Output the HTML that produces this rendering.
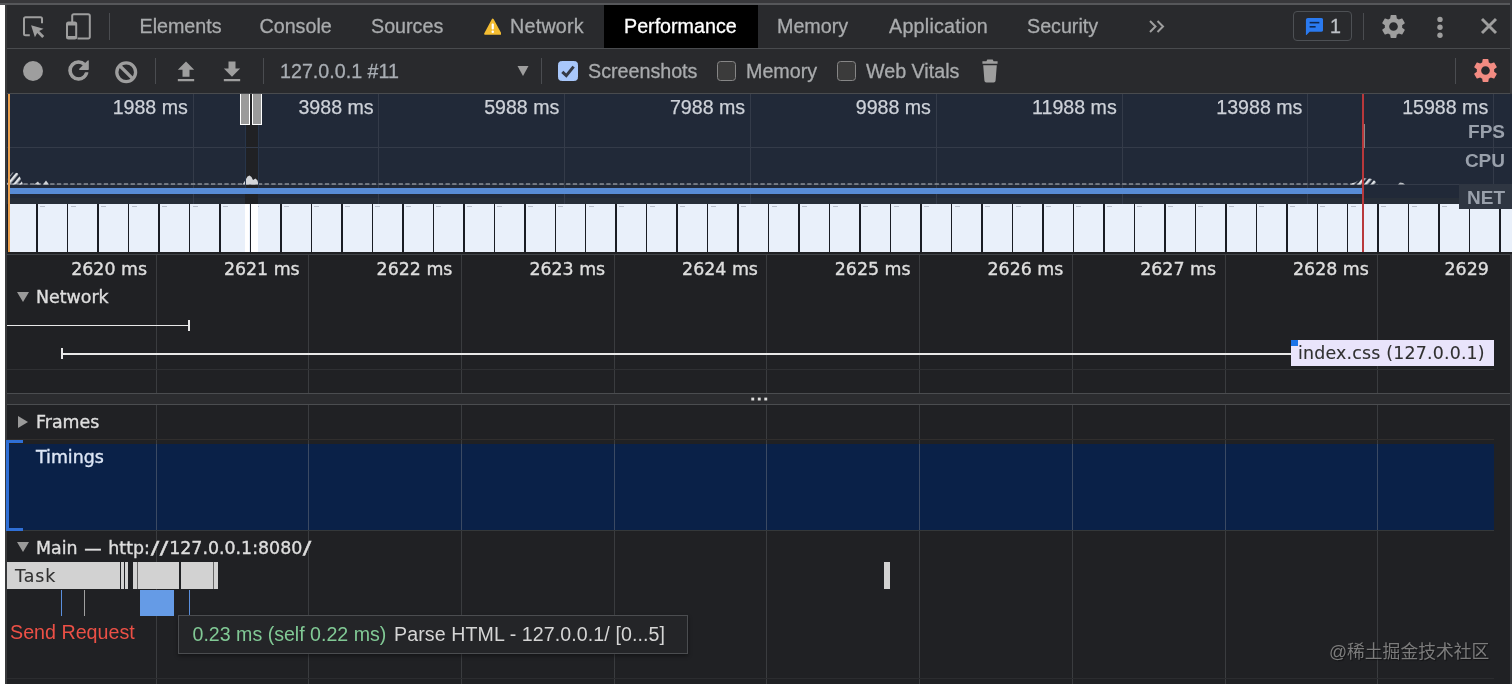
<!DOCTYPE html><html><head><meta charset="utf-8"><title>DevTools Performance</title><style>
*{box-sizing:border-box;margin:0;padding:0}
html,body{width:1512px;height:684px;overflow:hidden;background:#202124}
body{position:relative;will-change:transform;font-family:"Liberation Sans",sans-serif;color:#9e9e9e}
.abs,div,span,svg{position:absolute}
.t{white-space:nowrap;line-height:1}
.tab{font-size:19.7px;color:#a9abad;top:15px;-webkit-text-stroke:.3px currentColor;height:22px;line-height:22px}
.tb{font-size:19.7px;color:#a9abad;top:59.500px;-webkit-text-stroke:.3px currentColor;height:22px;line-height:22px}
.ov{-webkit-text-stroke:.25px currentColor;font-size:19.6px;color:#cdd1d8;top:96px;height:22px;line-height:22px;text-align:right;width:120px}
.lbl{font-size:19px;font-weight:bold;color:#99a0ab;text-align:right;width:80px;left:1425px;height:22px;line-height:22px}
i{font-style:normal;display:inline-block}
.sl{margin:0 1.900px;transform:scaleX(1.45)}
.fc{-webkit-text-stroke:.38px currentColor;font-family:"DejaVu Sans","Liberation Sans",sans-serif;font-size:17.4px;color:#dedede;height:22px;line-height:22px}
.vl{width:1px;background:#3a3c3f}
.cb{width:19.600px;height:19.600px;top:61.200px;border-radius:3.5px;border:1.800px solid #868686;background:#3b3b3b}
</style></head><body>
<div style="left:0;top:0;width:1512px;height:3px;background:#38383b"></div>
<div style="left:0;top:3px;width:1512px;height:2px;background:#56575a"></div>
<div style="left:0;top:5px;width:5px;height:679px;background:#fff"></div>
<div style="left:5px;top:5px;width:2px;height:679px;background:#38393b"></div>
<div style="left:7px;top:5px;width:1505px;height:43px;background:#292a2d"></div>
<div style="left:7px;top:48px;width:1505px;height:1px;background:#494b4e"></div>
<div style="left:7px;top:49px;width:1505px;height:44px;background:#292a2d"></div>
<div style="left:7px;top:93px;width:1505px;height:1px;background:#494b4e"></div>
<svg style="left:21px;top:13px" width="28" height="28" viewBox="0 0 28 28"><path d="M8.800 22.200H4.500a1.500 1.500 0 0 1-1.500-1.500V5.700A1.500 1.500 0 0 1 4.500 4.200h15a1.500 1.500 0 0 1 1.500 1.500V10.200" fill="none" stroke="#9e9e9e" stroke-width="2"/><path d="M10.100 12.300l3.800 12 2.300-4.300 5 5 2-2-5-5 4.300-2.300z" fill="#9e9e9e"/></svg>
<svg style="left:64px;top:11px" width="30" height="32" viewBox="0 0 30 32"><path d="M8.200 11V4.700A1.500 1.500 0 0 1 9.700 3.200h14.600a1.500 1.500 0 0 1 1.500 1.500v21.300a1.500 1.500 0 0 1-1.500 1.500H13.500" fill="none" stroke="#9e9e9e" stroke-width="2"/><rect x="3" y="11.500" width="9.200" height="16" rx="1.500" fill="none" stroke="#9e9e9e" stroke-width="2"/><rect x="3" y="11.500" width="9.200" height="3" fill="#9e9e9e"/><rect x="3" y="25" width="9.200" height="2.500" fill="#9e9e9e"/></svg>
<div class="vl" style="left:109px;top:13px;height:27px;background:#4a4c50"></div>
<span class="t tab" style="left:139.5px;">Elements</span>
<span class="t tab" style="left:259.5px;">Console</span>
<span class="t tab" style="left:371px;">Sources</span>
<svg style="left:483.500px;top:17.500px" width="17.500" height="17.500" viewBox="0 0 19 19"><path d="M9.500 1.600L17.900 17.200H1.100z" fill="#f4bd32" stroke="#f4bd32" stroke-width="2" stroke-linejoin="round"/><rect x="8.300" y="6" width="2.400" height="6.500" rx="1" fill="#fff"/><circle cx="9.500" cy="14.800" r="1.350" fill="#fff"/></svg>
<span class="t tab" style="left:510px;letter-spacing:.25px">Network</span>
<div style="left:604px;top:5px;width:154px;height:43px;background:#000"></div>
<span class="t tab" style="left:624px;color:#fff">Performance</span>
<span class="t tab" style="left:777px;">Memory</span>
<span class="t tab" style="left:889px;letter-spacing:.25px">Application</span>
<span class="t tab" style="left:1027px;">Security</span>
<svg style="left:1148px;top:19px" width="18" height="15" viewBox="0 0 18 15"><path d="M2 2l5.500 5.500L2 13M9.500 2l5.500 5.500L9.500 13" fill="none" stroke="#9e9e9e" stroke-width="2"/></svg>
<div style="left:1293px;top:11px;width:59px;height:30px;border:1px solid #4d5054;border-radius:4px"></div>
<svg style="left:1304.800px;top:16.600px" width="18.500" height="18.600" viewBox="0 0 20 20"><path d="M3 1h14.500a2 2 0 0 1 2 2v11a2 2 0 0 1-2 2H5l-4 4V3a2 2 0 0 1 2-2z" fill="#2a7af0"/><rect x="5" y="5.200" width="10.500" height="1.700" fill="#10284f"/><rect x="5" y="9.700" width="6.500" height="1.700" fill="#10284f"/></svg>
<span class="t tab" style="left:1330px;color:#bdc1c6">1</span>
<div class="vl" style="left:1363px;top:13px;height:27px;background:#4a4c50"></div>
<svg style="left:1379px;top:12px" width="29" height="29" viewBox="0 0 24 24"><path d="M19.14 12.94c.04-.3.06-.61.06-.94 0-.32-.02-.64-.07-.94l2.030-1.580c.18-.14.23-.41.12-.61l-1.920-3.320c-.12-.22-.37-.29-.59-.22l-2.390.96c-.5-.38-1.030-.7-1.620-.94l-.36-2.540c-.04-.24-.24-.41-.48-.41h-3.840c-.24 0-.43.17-.47.41l-.36 2.540c-.59.24-1.130.57-1.620.94l-2.390-.96c-.22-.08-.47 0-.59.22L2.740 8.870c-.12.21-.08.47.12.61l2.030 1.580c-.05.3-.09.63-.09.94s.02.64.07.94l-2.030 1.580c-.18.14-.23.41-.12.61l1.920 3.320c.12.22.37.29.59.22l2.390-.96c.5.38 1.030.7 1.620.94l.36 2.540c.05.24.24.41.48.41h3.840c.24 0 .44-.17.47-.41l.36-2.540c.59-.24 1.130-.56 1.620-.94l2.390.96c.22.08.47 0 .59-.22l1.920-3.320c.12-.22.07-.47-.12-.61l-2.010-1.580zM12 15.600c-1.980 0-3.600-1.620-3.600-3.600s1.620-3.600 3.600-3.600 3.600 1.620 3.600 3.600-1.620 3.600-3.600 3.600z" fill="#9e9e9e"/></svg>
<svg style="left:1435px;top:14px" width="10" height="26" viewBox="0 0 10 26"><circle cx="5" cy="5.400" r="2.700" fill="#9e9e9e"/><circle cx="5" cy="13.300" r="2.700" fill="#9e9e9e"/><circle cx="5" cy="21.200" r="2.700" fill="#9e9e9e"/></svg>
<svg style="left:1478px;top:15px" width="22" height="22" viewBox="0 0 22 22"><path d="M4 4l14 14M18 4l-14 14" stroke="#9e9e9e" stroke-width="2.900" fill="none"/></svg>
<div style="left:23px;top:60.700px;width:20.200px;height:20.200px;border-radius:50%;background:#9e9e9e"></div>
<svg style="left:64.300px;top:56.200px" width="29" height="29" viewBox="0 0 24 24"><path d="M17.650 6.350C16.200 4.900 14.210 4 12 4c-4.420 0-7.990 3.580-7.990 8s3.570 8 7.990 8c3.730 0 6.840-2.550 7.730-6h-2.080c-.82 2.330-3.040 4-5.650 4-3.310 0-6-2.690-6-6s2.690-6 6-6c1.660 0 3.140.69 4.220 1.780L13 11h7V4l-2.350 2.350z" fill="#9e9e9e" stroke="#9e9e9e" stroke-width="1" stroke-linejoin="round"/></svg>
<svg style="left:113px;top:58.500px" width="26" height="26" viewBox="0 0 26 26"><circle cx="13.200" cy="13.200" r="9.400" fill="none" stroke="#9e9e9e" stroke-width="3.300"/><path d="M6.500 6.500l13.400 13.400" stroke="#9e9e9e" stroke-width="3.300"/></svg>
<div class="vl" style="left:155.300px;top:58px;height:26px;background:#4a4c50"></div>
<svg style="left:172.200px;top:57.700px" width="28" height="28" viewBox="0 0 24 24"><path d="M9 16h6v-6h4l-7-7-7 7h4zm-4 2h14v2H5z" fill="#9e9e9e"/></svg>
<svg style="left:218px;top:57.500px" width="28" height="28" viewBox="0 0 24 24"><path d="M19 9h-4V3H9v6H5l7 7 7-7zM5 18v2h14v-2H5z" fill="#9e9e9e"/></svg>
<div class="vl" style="left:262.500px;top:58px;height:26px;background:#4a4c50"></div>
<span class="t tb" style="left:280px;color:#a8adb3">127.0.0.1 #11</span>
<svg style="left:516px;top:65px" width="14" height="12" viewBox="0 0 14 12"><path d="M1.500 1h11L7 11z" fill="#9e9e9e"/></svg>
<div class="vl" style="left:541px;top:58px;height:26px;background:#4a4c50"></div>
<div class="cb" style="left:558px;background:#a8c7fa;border-color:#a8c7fa"></div>
<svg style="left:558px;top:61px" width="20" height="20" viewBox="0 0 20 20"><path d="M4.300 10.800l4 3.800 7.300-9" fill="none" stroke="#353a45" stroke-width="3"/></svg>
<span class="t tb" style="left:588px;">Screenshots</span>
<div class="cb" style="left:716.500px"></div>
<span class="t tb" style="left:746px;">Memory</span>
<div class="cb" style="left:836.600px"></div>
<span class="t tb" style="left:866px;">Web Vitals</span>
<svg style="left:980px;top:58px" width="20" height="26" viewBox="0 0 20 26"><path d="M7.300 1.500h5.400l.9 1.700h4v2.600H2.400V3.200h4z" fill="#9e9e9e"/><path d="M3.200 7.200h13.600l-1.200 15.300a2 2 0 0 1-2 1.900H6.400a2 2 0 0 1-2-1.900z" fill="#9e9e9e"/></svg>
<div class="vl" style="left:1455px;top:58px;height:26px;background:#4a4c50"></div>
<svg style="left:1471px;top:56px" width="29" height="29" viewBox="0 0 24 24"><path d="M19.14 12.94c.04-.3.06-.61.06-.94 0-.32-.02-.64-.07-.94l2.030-1.580c.18-.14.23-.41.12-.61l-1.920-3.320c-.12-.22-.37-.29-.59-.22l-2.390.96c-.5-.38-1.030-.7-1.620-.94l-.36-2.540c-.04-.24-.24-.41-.48-.41h-3.840c-.24 0-.43.17-.47.41l-.36 2.540c-.59.24-1.130.57-1.620.94l-2.390-.96c-.22-.08-.47 0-.59.22L2.740 8.870c-.12.21-.08.47.12.61l2.030 1.580c-.05.3-.09.63-.09.94s.02.64.07.94l-2.030 1.580c-.18.14-.23.41-.12.61l1.920 3.320c.12.22.37.29.59.22l2.390-.96c.5.38 1.030.7 1.620.94l.36 2.540c.05.24.24.41.48.41h3.840c.24 0 .44-.17.47-.41l.36-2.540c.59-.24 1.130-.56 1.620-.94l2.390.96c.22.08.47 0 .59-.22l1.920-3.320c.12-.22.07-.47-.12-.61l-2.010-1.580zM12 15.600c-1.980 0-3.600-1.620-3.600-3.600s1.620-3.600 3.600-3.600 3.600 1.620 3.600 3.600-1.620 3.600-3.600 3.600z" fill="#f28b82"/></svg>
<div style="left:1510px;top:0;width:2px;height:94px;background:#38393c"></div>
<div style="left:1510px;top:254px;width:2px;height:430px;background:#38393c;z-index:5"></div>
<div style="left:7px;top:94px;width:1505px;height:160px;background:#212938"></div>
<div style="left:7px;top:198px;width:1505px;height:6px;background:#272e38"></div>
<div style="left:245px;top:94px;width:13px;height:160px;background:#202124"></div>
<div class="vl" style="left:192.6px;top:94px;height:110px;background:#343b49"></div>
<div class="vl" style="left:378.4px;top:94px;height:110px;background:#343b49"></div>
<div class="vl" style="left:564.1px;top:94px;height:110px;background:#343b49"></div>
<div class="vl" style="left:749.9px;top:94px;height:110px;background:#343b49"></div>
<div class="vl" style="left:935.7px;top:94px;height:110px;background:#343b49"></div>
<div class="vl" style="left:1121.5px;top:94px;height:110px;background:#343b49"></div>
<div class="vl" style="left:1307.2px;top:94px;height:110px;background:#343b49"></div>
<div class="vl" style="left:1493.0px;top:94px;height:110px;background:#343b49"></div>
<div style="left:7px;top:147px;width:1505px;height:1px;background:#343b49"></div>
<div style="left:7px;top:184px;width:1505px;height:1px;background:#343b49"></div>
<span class="t ov" style="left:67.8px">1988 ms</span>
<span class="t ov" style="left:253.6px">3988 ms</span>
<span class="t ov" style="left:439.3px">5988 ms</span>
<span class="t ov" style="left:625.1px">7988 ms</span>
<span class="t ov" style="left:810.9px">9988 ms</span>
<span class="t ov" style="left:996.7px">11988 ms</span>
<span class="t ov" style="left:1182.4px">13988 ms</span>
<span class="t ov" style="left:1368.2px">15988 ms</span>
<svg style="left:7px;top:168px" width="1505" height="18" viewBox="0 0 1505 18"><defs><pattern id="h" width="5" height="5" patternUnits="userSpaceOnUse" patternTransform="rotate(-50)"><rect width="5" height="2.600" fill="#dfe2e6"/></pattern></defs><line x1="3" y1="16" x2="1356" y2="16" stroke="#b9bdc2" stroke-width="1.200" stroke-dasharray="4.300 2.400"/><path d="M0 16.500L1 10l4.500-5.500 5 .5 3.500 6 2 5.500z" fill="url(#h)"/><path d="M27 16.500l4-3 2 3z" fill="#cfd2d6"/><path d="M36 16.500l3-4 3 4z" fill="#cfd2d6"/><path d="M235.500 16.500l2-3 3-5 2-1 2 1.500 1.500 3 2.500-1.500 2 2 1 4z" fill="#d3d5d9"/><path d="M1340 16.500l8-2 5-3 5-1.200 6 .4 4 2.300 2.500 3.500z" fill="url(#h)"/><path d="M1391 16.500l2-2 3 .5 2 1.500z" fill="#b9bdc2"/></svg>
<div style="left:10px;top:188px;width:1352px;height:6px;background:#588cd6"></div>
<div style="left:7px;top:204px;width:1505px;height:48px;background:#1a1d24"></div>
<div style="left:9.5px;top:204px;width:26.8px;height:48px;background:#e9f0fa"></div>
<div style="left:37.8px;top:204px;width:29.0px;height:48px;background:#e9f0fa"></div>
<div style="left:40.1px;top:206.300px;width:5px;height:1px;background:#b9c0cc"></div>
<div style="left:68.3px;top:204px;width:29.0px;height:48px;background:#e9f0fa"></div>
<div style="left:70.6px;top:206.300px;width:5px;height:1px;background:#b9c0cc"></div>
<div style="left:98.8px;top:204px;width:29.0px;height:48px;background:#e9f0fa"></div>
<div style="left:101.1px;top:206.300px;width:5px;height:1px;background:#b9c0cc"></div>
<div style="left:129.2px;top:204px;width:29.0px;height:48px;background:#e9f0fa"></div>
<div style="left:131.5px;top:206.300px;width:5px;height:1px;background:#b9c0cc"></div>
<div style="left:159.7px;top:204px;width:29.0px;height:48px;background:#e9f0fa"></div>
<div style="left:162.0px;top:206.300px;width:5px;height:1px;background:#b9c0cc"></div>
<div style="left:190.2px;top:204px;width:29.0px;height:48px;background:#e9f0fa"></div>
<div style="left:192.5px;top:206.300px;width:5px;height:1px;background:#b9c0cc"></div>
<div style="left:220.7px;top:204px;width:29.0px;height:48px;background:#e9f0fa"></div>
<div style="left:223.0px;top:206.300px;width:5px;height:1px;background:#b9c0cc"></div>
<div style="left:251.2px;top:204px;width:29.0px;height:48px;background:#e9f0fa"></div>
<div style="left:253.5px;top:206.300px;width:5px;height:1px;background:#b9c0cc"></div>
<div style="left:281.6px;top:204px;width:29.0px;height:48px;background:#e9f0fa"></div>
<div style="left:283.9px;top:206.300px;width:5px;height:1px;background:#b9c0cc"></div>
<div style="left:312.1px;top:204px;width:29.0px;height:48px;background:#e9f0fa"></div>
<div style="left:314.4px;top:206.300px;width:5px;height:1px;background:#b9c0cc"></div>
<div style="left:342.6px;top:204px;width:29.0px;height:48px;background:#e9f0fa"></div>
<div style="left:344.9px;top:206.300px;width:5px;height:1px;background:#b9c0cc"></div>
<div style="left:373.1px;top:204px;width:29.0px;height:48px;background:#e9f0fa"></div>
<div style="left:375.4px;top:206.300px;width:5px;height:1px;background:#b9c0cc"></div>
<div style="left:403.6px;top:204px;width:29.0px;height:48px;background:#e9f0fa"></div>
<div style="left:405.9px;top:206.300px;width:5px;height:1px;background:#b9c0cc"></div>
<div style="left:434.0px;top:204px;width:29.0px;height:48px;background:#e9f0fa"></div>
<div style="left:436.3px;top:206.300px;width:5px;height:1px;background:#b9c0cc"></div>
<div style="left:464.5px;top:204px;width:29.0px;height:48px;background:#e9f0fa"></div>
<div style="left:466.8px;top:206.300px;width:5px;height:1px;background:#b9c0cc"></div>
<div style="left:495.0px;top:204px;width:29.0px;height:48px;background:#e9f0fa"></div>
<div style="left:497.3px;top:206.300px;width:5px;height:1px;background:#b9c0cc"></div>
<div style="left:525.5px;top:204px;width:29.0px;height:48px;background:#e9f0fa"></div>
<div style="left:527.8px;top:206.300px;width:5px;height:1px;background:#b9c0cc"></div>
<div style="left:556.0px;top:204px;width:29.0px;height:48px;background:#e9f0fa"></div>
<div style="left:558.3px;top:206.300px;width:5px;height:1px;background:#b9c0cc"></div>
<div style="left:586.4px;top:204px;width:29.0px;height:48px;background:#e9f0fa"></div>
<div style="left:588.7px;top:206.300px;width:5px;height:1px;background:#b9c0cc"></div>
<div style="left:616.9px;top:204px;width:29.0px;height:48px;background:#e9f0fa"></div>
<div style="left:619.2px;top:206.300px;width:5px;height:1px;background:#b9c0cc"></div>
<div style="left:647.4px;top:204px;width:29.0px;height:48px;background:#e9f0fa"></div>
<div style="left:649.7px;top:206.300px;width:5px;height:1px;background:#b9c0cc"></div>
<div style="left:677.9px;top:204px;width:29.0px;height:48px;background:#e9f0fa"></div>
<div style="left:680.2px;top:206.300px;width:5px;height:1px;background:#b9c0cc"></div>
<div style="left:708.4px;top:204px;width:29.0px;height:48px;background:#e9f0fa"></div>
<div style="left:710.7px;top:206.300px;width:5px;height:1px;background:#b9c0cc"></div>
<div style="left:738.8px;top:204px;width:29.0px;height:48px;background:#e9f0fa"></div>
<div style="left:741.1px;top:206.300px;width:5px;height:1px;background:#b9c0cc"></div>
<div style="left:769.3px;top:204px;width:29.0px;height:48px;background:#e9f0fa"></div>
<div style="left:771.6px;top:206.300px;width:5px;height:1px;background:#b9c0cc"></div>
<div style="left:799.8px;top:204px;width:29.0px;height:48px;background:#e9f0fa"></div>
<div style="left:802.1px;top:206.300px;width:5px;height:1px;background:#b9c0cc"></div>
<div style="left:830.3px;top:204px;width:29.0px;height:48px;background:#e9f0fa"></div>
<div style="left:832.6px;top:206.300px;width:5px;height:1px;background:#b9c0cc"></div>
<div style="left:860.8px;top:204px;width:29.0px;height:48px;background:#e9f0fa"></div>
<div style="left:863.1px;top:206.300px;width:5px;height:1px;background:#b9c0cc"></div>
<div style="left:891.2px;top:204px;width:29.0px;height:48px;background:#e9f0fa"></div>
<div style="left:893.5px;top:206.300px;width:5px;height:1px;background:#b9c0cc"></div>
<div style="left:921.7px;top:204px;width:29.0px;height:48px;background:#e9f0fa"></div>
<div style="left:924.0px;top:206.300px;width:5px;height:1px;background:#b9c0cc"></div>
<div style="left:952.2px;top:204px;width:29.0px;height:48px;background:#e9f0fa"></div>
<div style="left:954.5px;top:206.300px;width:5px;height:1px;background:#b9c0cc"></div>
<div style="left:982.7px;top:204px;width:29.0px;height:48px;background:#e9f0fa"></div>
<div style="left:985.0px;top:206.300px;width:5px;height:1px;background:#b9c0cc"></div>
<div style="left:1013.2px;top:204px;width:29.0px;height:48px;background:#e9f0fa"></div>
<div style="left:1015.5px;top:206.300px;width:5px;height:1px;background:#b9c0cc"></div>
<div style="left:1043.6px;top:204px;width:29.0px;height:48px;background:#e9f0fa"></div>
<div style="left:1045.9px;top:206.300px;width:5px;height:1px;background:#b9c0cc"></div>
<div style="left:1074.1px;top:204px;width:29.0px;height:48px;background:#e9f0fa"></div>
<div style="left:1076.4px;top:206.300px;width:5px;height:1px;background:#b9c0cc"></div>
<div style="left:1104.6px;top:204px;width:29.0px;height:48px;background:#e9f0fa"></div>
<div style="left:1106.9px;top:206.300px;width:5px;height:1px;background:#b9c0cc"></div>
<div style="left:1135.1px;top:204px;width:29.0px;height:48px;background:#e9f0fa"></div>
<div style="left:1137.4px;top:206.300px;width:5px;height:1px;background:#b9c0cc"></div>
<div style="left:1165.6px;top:204px;width:29.0px;height:48px;background:#e9f0fa"></div>
<div style="left:1167.9px;top:206.300px;width:5px;height:1px;background:#b9c0cc"></div>
<div style="left:1196.0px;top:204px;width:29.0px;height:48px;background:#e9f0fa"></div>
<div style="left:1198.3px;top:206.300px;width:5px;height:1px;background:#b9c0cc"></div>
<div style="left:1226.5px;top:204px;width:29.0px;height:48px;background:#e9f0fa"></div>
<div style="left:1228.8px;top:206.300px;width:5px;height:1px;background:#b9c0cc"></div>
<div style="left:1257.0px;top:204px;width:29.0px;height:48px;background:#e9f0fa"></div>
<div style="left:1259.3px;top:206.300px;width:5px;height:1px;background:#b9c0cc"></div>
<div style="left:1287.5px;top:204px;width:29.0px;height:48px;background:#e9f0fa"></div>
<div style="left:1289.8px;top:206.300px;width:5px;height:1px;background:#b9c0cc"></div>
<div style="left:1318.0px;top:204px;width:29.0px;height:48px;background:#e9f0fa"></div>
<div style="left:1320.3px;top:206.300px;width:5px;height:1px;background:#b9c0cc"></div>
<div style="left:1348.4px;top:204px;width:29.0px;height:48px;background:#e9f0fa"></div>
<div style="left:1350.7px;top:206.300px;width:5px;height:1px;background:#b9c0cc"></div>
<div style="left:1378.9px;top:204px;width:29.0px;height:48px;background:#e9f0fa"></div>
<div style="left:1381.2px;top:206.300px;width:5px;height:1px;background:#b9c0cc"></div>
<div style="left:1409.4px;top:204px;width:29.0px;height:48px;background:#e9f0fa"></div>
<div style="left:1411.7px;top:206.300px;width:5px;height:1px;background:#b9c0cc"></div>
<div style="left:1439.9px;top:204px;width:29.0px;height:48px;background:#e9f0fa"></div>
<div style="left:1442.2px;top:206.300px;width:5px;height:1px;background:#b9c0cc"></div>
<div style="left:1470.4px;top:204px;width:29.0px;height:48px;background:#e9f0fa"></div>
<div style="left:1472.7px;top:206.300px;width:5px;height:1px;background:#b9c0cc"></div>
<div style="left:1500.8px;top:204px;width:11.2px;height:48px;background:#e9f0fa"></div>
<div style="left:1503.1px;top:206.300px;width:5px;height:1px;background:#b9c0cc"></div>
<div style="left:251.300px;top:204px;width:6.700px;height:48px;background:#fff"></div>
<div style="left:245px;top:204px;width:4.300px;height:48px;background:#fff"></div>
<div style="left:244.500px;top:125px;width:1px;height:63px;background:#27354a"></div>
<div style="left:257.500px;top:125px;width:1px;height:63px;background:#27354a"></div>
<div style="left:240px;top:94px;width:10px;height:31px;background:#9a9a9a;border:1.500px solid #fff;border-top:none"></div>
<div style="left:252px;top:94px;width:10px;height:31px;background:#9a9a9a;border:1.500px solid #fff;border-top:none"></div>
<div style="left:7.800px;top:94px;width:2.300px;height:160px;background:#eaa04e"></div>
<div style="left:1362px;top:94px;width:1.800px;height:160px;background:#b8383b"></div>
<div style="left:1364.200px;top:124px;width:1px;height:24px;background:#8a8a8a"></div>
<div style="left:1459px;top:184px;width:53px;height:25px;background:#2f3642"></div>
<span class="t lbl" style="top:121px">FPS</span>
<span class="t lbl" style="top:150px">CPU</span>
<span class="t lbl" style="top:187px">NET</span>
<div style="left:7px;top:252px;width:1505px;height:2px;background:#202124"></div>
<div style="left:7px;top:254px;width:1505px;height:1px;background:#3f4246"></div>
<div class="vl" style="left:155.5px;top:255px;height:138px"></div>
<div class="vl" style="left:155.5px;top:405px;height:279px"></div>
<div class="vl" style="left:308.2px;top:255px;height:138px"></div>
<div class="vl" style="left:308.2px;top:405px;height:279px"></div>
<div class="vl" style="left:460.9px;top:255px;height:138px"></div>
<div class="vl" style="left:460.9px;top:405px;height:279px"></div>
<div class="vl" style="left:613.7px;top:255px;height:138px"></div>
<div class="vl" style="left:613.7px;top:405px;height:279px"></div>
<div class="vl" style="left:766.4px;top:255px;height:138px"></div>
<div class="vl" style="left:766.4px;top:405px;height:279px"></div>
<div class="vl" style="left:919.1px;top:255px;height:138px"></div>
<div class="vl" style="left:919.1px;top:405px;height:279px"></div>
<div class="vl" style="left:1071.8px;top:255px;height:138px"></div>
<div class="vl" style="left:1071.8px;top:405px;height:279px"></div>
<div class="vl" style="left:1224.5px;top:255px;height:138px"></div>
<div class="vl" style="left:1224.5px;top:405px;height:279px"></div>
<div class="vl" style="left:1377.3px;top:255px;height:138px"></div>
<div class="vl" style="left:1377.3px;top:405px;height:279px"></div>
<span class="t fc" style="left:27.0px;top:257.500px;width:120px;text-align:right">2620 ms</span>
<span class="t fc" style="left:179.7px;top:257.500px;width:120px;text-align:right">2621 ms</span>
<span class="t fc" style="left:332.4px;top:257.500px;width:120px;text-align:right">2622 ms</span>
<span class="t fc" style="left:485.2px;top:257.500px;width:120px;text-align:right">2623 ms</span>
<span class="t fc" style="left:637.9px;top:257.500px;width:120px;text-align:right">2624 ms</span>
<span class="t fc" style="left:790.6px;top:257.500px;width:120px;text-align:right">2625 ms</span>
<span class="t fc" style="left:943.3px;top:257.500px;width:120px;text-align:right">2626 ms</span>
<span class="t fc" style="left:1096.0px;top:257.500px;width:120px;text-align:right">2627 ms</span>
<span class="t fc" style="left:1248.8px;top:257.500px;width:120px;text-align:right">2628 ms</span>
<div style="left:1400px;top:255px;width:94px;height:30px;overflow:hidden"><span class="t fc" style="left:44.500px;top:2.500px">2629 ms</span></div>
<svg style="left:16px;top:291px" width="14" height="12" viewBox="0 0 14 12"><path d="M1 1h12L7 11z" fill="#9a9a9a"/></svg>
<span class="t fc" style="left:36px;top:286px">Network</span>
<div style="left:7px;top:324.500px;width:182px;height:1.500px;background:#e8e8e8"></div>
<div style="left:188px;top:320px;width:1.500px;height:11px;background:#e8e8e8"></div>
<div style="left:61px;top:353px;width:1231px;height:1.500px;background:#e8e8e8"></div>
<div style="left:61px;top:348px;width:1.500px;height:11px;background:#e8e8e8"></div>
<div style="left:1291px;top:339.500px;width:203px;height:26.500px;background:#e9e4fb"></div>
<div style="left:1291px;top:339.500px;width:6.500px;height:6.500px;background:#1a73e8"></div>
<span class="t fc" style="left:1298px;top:342px;color:#303030;letter-spacing:.19px;-webkit-text-stroke:.1px #303030">index.css (127.0.0.1)</span>
<div style="left:7px;top:369px;width:1487px;height:1px;background:#2f3033"></div>
<div style="left:7px;top:392.500px;width:1505px;height:12.800px;background:#2b2c2f;border-top:1px solid #4b4d50;border-bottom:1px solid #4b4d50"></div>
<svg style="left:750px;top:396px" width="20" height="6" viewBox="0 0 20 6"><rect x="1.300" y="1.600" width="2.900" height="2.900" fill="#dcdcdc"/><rect x="7.800" y="1.600" width="2.900" height="2.900" fill="#dcdcdc"/><rect x="14.300" y="1.600" width="2.900" height="2.900" fill="#dcdcdc"/></svg>
<svg style="left:17px;top:415px" width="12" height="14" viewBox="0 0 12 14"><path d="M1 1v12l10-6z" fill="#9a9a9a"/></svg>
<span class="t fc" style="left:36px;top:411px">Frames</span>
<div style="left:7px;top:439px;width:1487px;height:1px;background:#302e2d"></div>
<div style="left:7px;top:443.500px;width:1487px;height:86px;background:#0a2148"></div>
<div style="left:7px;top:530px;width:1487px;height:1px;background:#34383a"></div>
<div style="left:5.500px;top:440px;width:17.500px;height:91px;border:3.500px solid #2f6fd6;border-right:none"></div>
<span class="t fc" style="left:36px;top:446px;color:#dde6f5">Timings</span>
<div class="vl" style="left:155.5px;top:443.500px;height:86px;background:#3b4a63"></div>
<div class="vl" style="left:308.2px;top:443.500px;height:86px;background:#3b4a63"></div>
<div class="vl" style="left:460.9px;top:443.500px;height:86px;background:#3b4a63"></div>
<div class="vl" style="left:613.7px;top:443.500px;height:86px;background:#3b4a63"></div>
<div class="vl" style="left:766.4px;top:443.500px;height:86px;background:#3b4a63"></div>
<div class="vl" style="left:919.1px;top:443.500px;height:86px;background:#3b4a63"></div>
<div class="vl" style="left:1071.8px;top:443.500px;height:86px;background:#3b4a63"></div>
<div class="vl" style="left:1224.5px;top:443.500px;height:86px;background:#3b4a63"></div>
<div class="vl" style="left:1377.3px;top:443.500px;height:86px;background:#3b4a63"></div>
<svg style="left:16px;top:541px" width="14" height="12" viewBox="0 0 14 12"><path d="M1 1h12L7 11z" fill="#9a9a9a"/></svg>
<span class="t fc" style="left:36px;top:537px">Main <i style="margin:0 1.200px">—</i> http:<i class="sl">/</i><i class="sl">/</i>127.0.0.1:8080<i class="sl">/</i></span>
<div style="left:6.6px;top:562px;width:113.0px;height:26.6px;background:#d2d2d2"></div>
<div style="left:121px;top:562px;width:3.3px;height:26.6px;background:#d2d2d2"></div>
<div style="left:125.4px;top:562px;width:2.6px;height:26.6px;background:#d2d2d2"></div>
<div style="left:133px;top:562px;width:45.6px;height:26.6px;background:#d2d2d2"></div>
<div style="left:137.2px;top:562px;width:1.0px;height:26.6px;background:#666"></div>
<div style="left:180.7px;top:562px;width:37.8px;height:26.6px;background:#d2d2d2"></div>
<div style="left:213.2px;top:562px;width:1.0px;height:26.6px;background:#666"></div>
<div style="left:884.4px;top:562px;width:6.1px;height:26.6px;background:#d2d2d2"></div>
<span class="t fc" style="left:15px;top:564.800px;color:#303030;letter-spacing:.9px;-webkit-text-stroke:.1px #303030">Task</span>
<div style="left:61px;top:590px;width:1.2px;height:26.0px;background:#5a8fdd"></div>
<div style="left:84px;top:590px;width:1.2px;height:26.0px;background:#a0a0a0"></div>
<div style="left:140px;top:590px;width:34.3px;height:26.0px;background:#659be6"></div>
<div style="left:189.3px;top:590px;width:1.2px;height:26.0px;background:#5a8fdd"></div>
<span class="t" style="left:10px;top:621px;font-size:19.700px;color:#ec5046;height:22px;line-height:22px">Send Request</span>
<div style="left:178px;top:615px;width:510px;height:39px;background:#242528;border:1px solid #4b4d50;box-shadow:0 2px 4px rgba(0,0,0,.4)"></div>
<span class="t" style="left:192.500px;top:623.300px;font-size:19.600px;color:#81c995;height:22px;line-height:22px">0.23 ms (self 0.22 ms)</span>
<span class="t" style="left:394px;top:623.300px;letter-spacing:.09px;font-size:19.600px;color:#d5d5d5;height:22px;line-height:22px">Parse HTML - 127.0.0.1/ [0...5]</span>
<div style="left:7px;top:677.500px;width:1487px;height:1px;background:#2b2c2f"></div>
<span class="t" style="left:1329px;top:641px;font-family:'Liberation Sans','Noto Sans CJK SC',sans-serif;font-size:17.800px;color:#7c7c7c;text-shadow:1px 1px 1px rgba(0,0,0,.45);height:22px;line-height:22px">@稀土掘金技术社区</span>
</body></html>
